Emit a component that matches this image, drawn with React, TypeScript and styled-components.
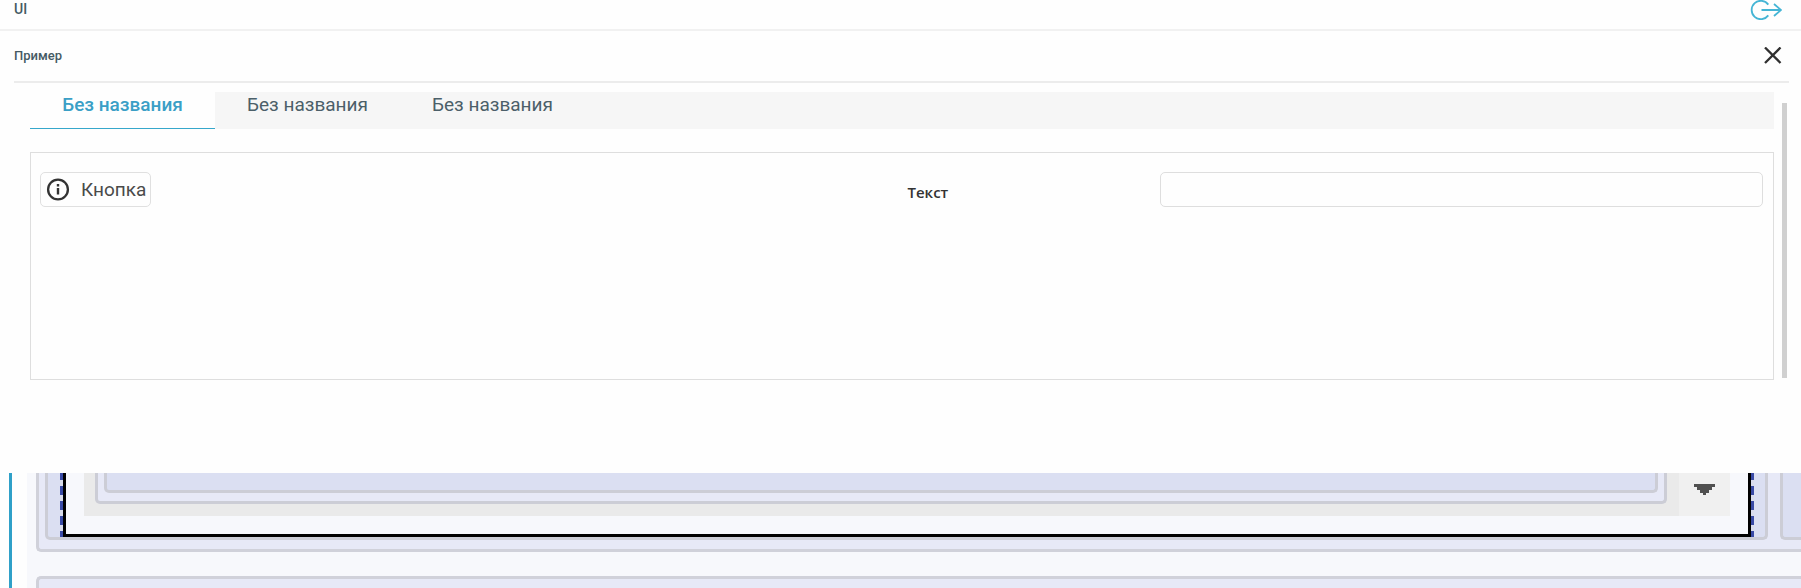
import React from "react";
import styled, { createGlobalStyle } from "styled-components";

const GlobalStyle = createGlobalStyle`
  * { box-sizing: border-box; }
  body {
    margin: 0;
    background: #fefefe;
    font-family: Roboto, "Liberation Sans", sans-serif;
    overflow: hidden;
  }
  button { font-family: inherit; cursor: pointer; }
`;

const TopBar = styled.header`
  display: flex;
  justify-content: space-between;
  align-items: flex-start;
  height: 31px;
  padding: 0 19px 0 14px;
  border-bottom: 2px solid #f1f1f1;
`;

const AppName = styled.span`
  font-size: 14px;
  font-weight: 500;
  line-height: 18px;
  color: #455a64;
`;

const IconButton = styled.button`
  display: flex;
  padding: 0;
  border: 0;
  background: none;
`;

const Page = styled.main`
  padding: 0 12px 0 14px;
`;

const PageHeader = styled.div`
  display: flex;
  justify-content: space-between;
  align-items: center;
  height: 52px;
  padding-right: 7px;
  border-bottom: 2px solid #ececec;
`;

const PageTitle = styled.h1`
  margin: 0;
  font-size: 13px;
  font-weight: 500;
  line-height: 18px;
  color: #455a64;
`;

const ScrollArea = styled.div`
  display: flex;
  justify-content: space-between;
  padding: 9px 2px 0 16px;
`;

const Content = styled.div`
  flex: 1;
  margin-right: 8px;
`;

const ScrollThumb = styled.div`
  width: 5px;
  height: 275px;
  margin-top: 11px;
  background: #d0d0d0;
`;

const TabList = styled.div`
  display: flex;
  height: 37px;
  background: #f6f6f6;
`;

const Tab = styled.button<{ $active?: boolean }>`
  width: 185px;
  padding: 0 0 10px;
  border: 0;
  border-bottom: 1px solid ${(p) => (p.$active ? "#36a7cb" : "transparent")};
  background: ${(p) => (p.$active ? "#fefefe" : "transparent")};
  color: ${(p) => (p.$active ? "#3a9fc6" : "#4b5f69")};
  font-size: 19px;
  font-weight: ${(p) => (p.$active ? 500 : 400)};
  line-height: 26px;
`;

const Panel = styled.section`
  display: grid;
  grid-template-columns: 1fr 1fr;
  align-items: start;
  height: 228px;
  margin-top: 23px;
  padding: 19px 10px 0 9px;
  border: 1px solid #dedede;
`;

const ActionButton = styled.button`
  display: flex;
  align-items: center;
  justify-self: start;
  gap: 11px;
  height: 35px;
  padding: 0 4px 0 5px;
  border: 1px solid #e0e0e0;
  border-radius: 5px;
  background: #fefefe;
  color: #4a4a4a;
  font-size: 19px;
  line-height: 24px;
`;

const Field = styled.div`
  display: flex;
  align-items: center;
`;

const FieldLabel = styled.label`
  flex: 1;
  padding: 4px 0 0 6px;
  color: #333;
  font-family: "Open Sans", "Noto Sans", sans-serif;
  font-size: 15px;
  font-weight: 600;
  line-height: 20px;
`;

const TextInput = styled.input`
  width: 70%;
  height: 35px;
  padding: 0 8px;
  border: 1px solid #dedede;
  border-radius: 5px;
  background: #fefefe;
  font-size: 16px;
  outline: none;
`;

const Workspace = styled.section`
  margin: 93px 0 0 9px;
  padding-left: 15px;
  border-left: 3px solid #2fa0c8;
`;

const Canvas = styled.div`
  display: flex;
  flex-direction: column;
  gap: 24px;
  height: 115px;
  padding-left: 9px;
  background: #f7f8fc;
  overflow: hidden;
`;

const Group = styled.div`
  display: flex;
  gap: 12px;
  padding: 0 0 9px 6px;
  border: solid #d0d1da;
  border-width: 0 0 3px 3px;
  border-bottom-left-radius: 5px;
  background: #e7e9f7;
`;

const NextGroup = styled.div`
  flex: 1;
  border: solid #d0d1da;
  border-width: 3px 0 0 3px;
  border-top-left-radius: 5px;
  background: #e7e9f7;
`;

const Cell = styled.div`
  flex: 1;
  padding: 0 11px 0 12px;
  border: 3px solid #cccdd6;
  border-top: 0;
  border-radius: 0 0 5px 5px;
  background: #dbdff2;
`;

const EdgeCell = styled.div`
  width: 21px;
  border: solid #cccdd6;
  border-width: 0 0 3px 3px;
  border-bottom-left-radius: 5px;
  background: #dbdff2;
`;

const Selection = styled.div`
  padding: 0 3px;
  background: repeating-linear-gradient(
    to bottom,
    #3a4ba6 0 7px,
    #d9dcec 7px 13px,
    #3a4ba6 13px 15px
  );
`;

const Dialog = styled.div`
  display: flex;
  height: 64px;
  padding: 0 18px;
  border: 3px solid #000;
  border-top: 0;
  background: #f7f8fc;
`;

const Viewport = styled.div`
  flex: 1;
  height: 43px;
  padding: 0 12px 0 11px;
  background: #eaeaea;
`;

const Card = styled.div`
  height: 31px;
  padding: 0 6px;
  border: 3px solid #cccdd6;
  border-top: 0;
  border-radius: 0 0 5px 5px;
  background: #e7e9f7;
`;

const CardBody = styled.div`
  height: 20px;
  border: 3px solid #cccdd6;
  border-top: 0;
  border-radius: 0 0 5px 5px;
  background: #dbdff2;
`;

const ScrollDown = styled.button`
  display: flex;
  justify-content: center;
  align-items: flex-start;
  width: 51px;
  height: 43px;
  padding: 11px 0 0;
  border: 0;
  background: #f0f0f0;
`;

const LogoutIcon = () => (
  <svg width="32" height="20" viewBox="0 0 32 20" fill="none" stroke="#45b5d5" strokeWidth="1.8">
    <path d="M18.3 4.6A9.2 9.2 0 1 0 18.3 15.4" />
    <path d="M11.5 10H31M24 4L31 10L24 16" />
  </svg>
);

const CloseIcon = () => (
  <svg width="18" height="18" viewBox="0 0 18 18" stroke="#303030" strokeWidth="2.3">
    <path d="M1 0.5L16.5 16M16.5 0.5L1 16" />
  </svg>
);

const InfoIcon = () => (
  <svg width="24" height="24" viewBox="0 0 24 24" fill="none">
    <circle cx="12" cy="11.5" r="9.9" stroke="#333" strokeWidth="2.3" />
    <path d="M12 10V16.5M12 6V8.5" stroke="#333" strokeWidth="2.4" />
  </svg>
);

const ArrowIcon = () => (
  <svg width="21" height="11" viewBox="0 0 21 11" fill="#505050" shapeRendering="crispEdges">
    <path d="M0 0H21V3H18V6H15V8H15V9H12V11H9V9H6V6H3V3H0Z" />
  </svg>
);

const tabs = ["Без названия", "Без названия", "Без названия"];

export default function App() {
  const [active, setActive] = React.useState(0);
  return (
    <>
      <GlobalStyle />
      <TopBar>
        <AppName>UI</AppName>
        <IconButton aria-label="Выход">
          <LogoutIcon />
        </IconButton>
      </TopBar>
      <Page>
        <PageHeader>
          <PageTitle>Пример</PageTitle>
          <IconButton aria-label="Закрыть">
            <CloseIcon />
          </IconButton>
        </PageHeader>
        <ScrollArea>
          <Content>
            <TabList role="tablist">
              {tabs.map((name, i) => (
                <Tab
                  key={i}
                  role="tab"
                  aria-selected={i === active}
                  $active={i === active}
                  onClick={() => setActive(i)}
                >
                  {name}
                </Tab>
              ))}
            </TabList>
            <Panel role="tabpanel">
              <ActionButton>
                <InfoIcon />
                Кнопка
              </ActionButton>
              <Field>
                <FieldLabel htmlFor="text-field">Текст</FieldLabel>
                <TextInput id="text-field" type="text" />
              </Field>
            </Panel>
          </Content>
          <ScrollThumb />
        </ScrollArea>
      </Page>
      <Workspace>
        <Canvas>
          <Group>
            <Cell>
              <Selection>
                <Dialog>
                  <Viewport>
                    <Card>
                      <CardBody />
                    </Card>
                  </Viewport>
                  <ScrollDown aria-label="Прокрутить вниз">
                    <ArrowIcon />
                  </ScrollDown>
                </Dialog>
              </Selection>
            </Cell>
            <EdgeCell />
          </Group>
          <NextGroup />
        </Canvas>
      </Workspace>
    </>
  );
}
